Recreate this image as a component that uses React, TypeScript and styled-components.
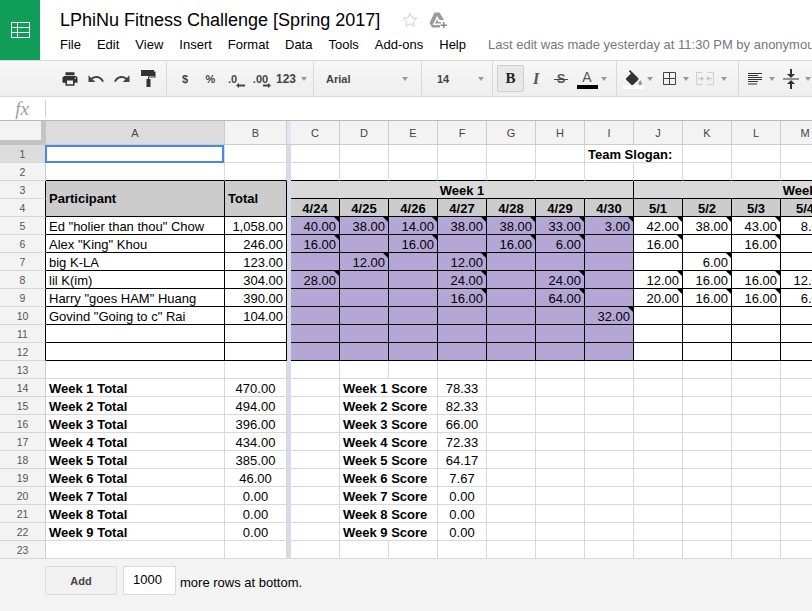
import styled, { createGlobalStyle } from 'styled-components'

const GlobalStyle = createGlobalStyle`
  html, body {
    margin: 0;
    padding: 0;
    background: #fff;
    overflow: hidden;
  }
  body {
    font-family: "Liberation Sans", Arial, sans-serif;
    color: #000;
  }
`

const Page = styled.div`
  width: 812px;
  height: 611px;
  display: flex;
  flex-direction: column;
  overflow: hidden;
`

/* ---- title bar ---- */

const Header = styled.header`
  height: 60px;
  display: flex;
  flex-shrink: 0;
`

const Logo = styled.div`
  width: 40px;
  height: 60px;
  background: #0f9d58;
  display: flex;
  align-items: center;
  justify-content: center;
  flex-shrink: 0;
`

const HeaderBody = styled.div`
  padding: 9px 0 0 20px;
  min-width: 0;
`

const TitleRow = styled.div`
  display: flex;
  align-items: center;
  height: 22px;
`

const Title = styled.div`
  font-size: 18px;
  line-height: 22px;
  white-space: nowrap;
`

const StarIcon = styled.svg`
  margin-left: 22px;
  display: block;
`

const DriveIcon = styled.svg`
  margin-left: 11px;
  display: block;
`

const MenuRow = styled.nav`
  display: flex;
  align-items: center;
  height: 20px;
  margin-top: 3px;
  font-size: 13px;
  white-space: nowrap;
`

const MenuItem = styled.span`
  margin-right: 16px;
`

const LastEdit = styled.span`
  margin-left: 6px;
  color: #777;
`

/* ---- toolbar ---- */

const Toolbar = styled.div`
  height: 37px;
  flex-shrink: 0;
  display: flex;
  box-sizing: border-box;
  border-top: 1px solid #d9d9d9;
  border-bottom: 1px solid #d9d9d9;
  background: linear-gradient(#f7f7f7, #eeeeee);
  overflow: hidden;
`

const Group = styled.div<{ $w: number; $pl?: number; $pr?: number; $spread?: boolean }>`
  width: ${(p) => p.$w}px;
  flex-shrink: 0;
  box-sizing: border-box;
  display: flex;
  align-items: center;
  justify-content: ${(p) => (p.$spread ? 'space-between' : 'flex-start')};
  padding-left: ${(p) => p.$pl ?? 0}px;
  padding-right: ${(p) => p.$pr ?? 0}px;
  border-right: 1px solid #d9d9d9;
`

const LastGroup = styled(Group)`
  border-right: 0;
`

const Tool = styled.div<{ $w: number; $ml?: number }>`
  width: ${(p) => p.$w}px;
  margin-left: ${(p) => p.$ml ?? 0}px;
  flex-shrink: 0;
  display: flex;
  flex-direction: column;
  align-items: center;
  justify-content: center;
  position: relative;
  font-size: 11px;
  font-weight: bold;
  color: #444;
`

const Caret = styled.span`
  width: 0;
  height: 0;
  border-left: 3.5px solid transparent;
  border-right: 3.5px solid transparent;
  border-top: 4px solid #999;
`

const CaretTool = styled(Tool)`
  height: 10px;
`

const ToolLabel = styled.span<{ $size?: number }>`
  font-size: ${(p) => p.$size ?? 11}px;
  line-height: 12px;
  white-space: nowrap;
`

const SelectLabel = styled.span`
  font-size: 11px;
  font-weight: bold;
  color: #444;
`

const DecimalLabel = styled.span<{ $shift: number }>`
  font-size: 11px;
  font-weight: bold;
  line-height: 12px;
  color: #444;
  margin-left: ${(p) => p.$shift}px;
`

const DecimalArrow = styled.span<{ $left: number }>`
  position: absolute;
  left: ${(p) => p.$left}px;
  top: 22px;
`

const BoldButton = styled.div`
  width: 27px;
  height: 27px;
  box-sizing: border-box;
  flex-shrink: 0;
  display: flex;
  align-items: center;
  justify-content: center;
  background: #e8e8e8;
  border: 1px solid #cfcfcf;
  border-radius: 2px;
  font-family: "Liberation Serif", serif;
  font-weight: bold;
  font-size: 15px;
  color: #222;
`

const ItalicMark = styled.span`
  font-family: "Liberation Serif", serif;
  font-style: italic;
  font-weight: bold;
  font-size: 16px;
  color: #555;
`

const StrikeMark = styled.span`
  position: relative;
  font-size: 13px;
  font-weight: bold;
  color: #555;
  &::after {
    content: '';
    position: absolute;
    left: -3px;
    right: -3px;
    top: 8px;
    height: 1px;
    background: #444;
  }
`

const TextColorMark = styled.span`
  font-size: 14px;
  font-weight: normal;
  line-height: 14px;
  color: #555;
  margin-top: -3px;
`

const ColorBar = styled.span<{ $color: string }>`
  position: absolute;
  left: 50%;
  margin-left: -10.5px;
  top: 24px;
  width: 21px;
  height: 4px;
  background: ${(p) => p.$color};
`

const ToolWrap = styled(Tool)`
  height: 35px;
`

/* ---- formula bar ---- */

const FormulaBar = styled.div`
  height: 24px;
  flex-shrink: 0;
  box-sizing: border-box;
  display: flex;
  align-items: center;
  border-bottom: 1px solid #b8b8b8;
`

const FxBox = styled.div`
  width: 45px;
  height: 17px;
  box-sizing: content-box;
  display: flex;
  align-items: center;
  justify-content: center;
  border-right: 1px solid #d0d0d0;
`

const FxLabel = styled.span`
  font-family: "Liberation Serif", serif;
  font-style: italic;
  font-size: 19px;
  color: #a0a0a0;
  line-height: 17px;
  margin-right: 1px;
`

/* ---- sheet ---- */

const SheetClip = styled.div`
  width: 812px;
  height: 438px;
  flex-shrink: 0;
  overflow: hidden;
`

const Sheet = styled.table`
  width: 977px;
  table-layout: fixed;
  border-collapse: separate;
  border-spacing: 0;
  font-size: 13px;
`

const Column = styled.col<{ $w: number }>`
  width: ${(p) => p.$w}px;
`

const Corner = styled.th`
  height: 24px;
  box-sizing: border-box;
  padding: 0;
  background: #f3f3f3;
  border-right: 5px solid #c4c4c4;
  border-bottom: 5px solid #c4c4c4;
`

const ColumnHead = styled.th<{ $active?: boolean }>`
  height: 24px;
  box-sizing: border-box;
  padding: 0;
  font-size: 11px;
  font-weight: normal;
  color: #444;
  background: ${(p) => (p.$active ? '#dcdcdc' : '#f3f3f3')};
  border-right: 1px solid #cccccc;
  border-bottom: 1px solid #cccccc;
`

const RowHead = styled.th<{ $active?: boolean; $dark?: boolean }>`
  height: 18px;
  box-sizing: border-box;
  padding: 0;
  font-size: 10.5px;
  font-weight: normal;
  color: #555;
  background: ${(p) => (p.$active ? '#dcdcdc' : '#f3f3f3')};
  border-right: 1px solid ${(p) => (p.$dark ? '#000' : '#cccccc')};
  border-bottom: 1px solid #d6d6d6;
`

const FreezeBar = styled.td`
  padding: 0;
  background: #d6dbe9;
`

const FreezeHead = styled.th`
  padding: 0;
  background: #e2e6f1;
  border-bottom: 1px solid #cccccc;
`

const Cell = styled.td<{
  $fill?: string
  $align?: string
  $bold?: boolean
  $darkRight?: boolean
  $darkBottom?: boolean
  $flag?: boolean
  $mid?: boolean
  $selected?: boolean
}>`
  position: relative;
  height: 18px;
  box-sizing: border-box;
  padding: 0 3px;
  overflow: hidden;
  white-space: nowrap;
  line-height: 14px;
  vertical-align: ${(p) => (p.$mid ? 'middle' : 'bottom')};
  text-align: ${(p) => p.$align ?? 'left'};
  font-weight: ${(p) => (p.$bold ? 'bold' : 'normal')};
  background: ${(p) => p.$fill ?? '#fff'};
  border-right: 1px solid ${(p) => (p.$darkRight ? '#000' : '#d9d9d9')};
  border-bottom: 1px solid ${(p) => (p.$darkBottom ? '#000' : '#d9d9d9')};

  ${(p) =>
    p.$flag &&
    `
    &::after {
      content: '';
      position: absolute;
      top: 0;
      right: 0;
      border-top: 5px solid #000;
      border-left: 5px solid transparent;
    }
  `}

  ${(p) =>
    p.$selected &&
    `
    overflow: visible;
    &::before {
      content: '';
      position: absolute;
      top: 0;
      left: -1px;
      right: 0;
      bottom: -1px;
      border: 2px solid #4a86e8;
      pointer-events: none;
    }
  `}
`

/* ---- add rows ---- */

const Footer = styled.div`
  flex: 1;
  background: #f3f3f3;
  display: flex;
  align-items: flex-start;
  padding: 7px 0 0 45px;
`

const AddButton = styled.div`
  width: 72px;
  height: 29px;
  box-sizing: border-box;
  display: flex;
  align-items: center;
  justify-content: center;
  background: #f1f1f1;
  border: 1px solid #dcdcdc;
  border-radius: 2px;
  font-size: 11px;
  font-weight: bold;
  color: #444;
`

const RowsInput = styled.div`
  width: 53px;
  height: 29px;
  box-sizing: border-box;
  margin-left: 6px;
  padding: 0 0 3px 9px;
  display: flex;
  align-items: center;
  background: #fff;
  border: 1px solid #d9d9d9;
  font-size: 13px;
`

const FooterText = styled.span`
  margin-left: 4px;
  margin-top: 8px;
  font-size: 13px;
  line-height: 18px;
`

/* ---- icons ---- */

const Icon = ({ w, h, box, children }: { w: number; h: number; box?: string; children: React.ReactNode }) => (
  <svg width={w} height={h} viewBox={box ?? `0 0 ${w} ${h}`} style={{ display: 'block' }}>
    {children}
  </svg>
)

const SheetsLogo = () => (
  <Icon w={19} h={16}>
    <path
      fill="none"
      stroke="#fff"
      strokeWidth="1"
      d="M.5.5h18v15H.5zM.5 5.5h18M.5 10.5h18M6.5.5v15"
    />
  </Icon>
)

const dataColumns = ['C', 'D', 'E', 'F', 'G', 'H', 'I', 'J', 'K', 'L', 'M', 'N', 'O', 'P']
const dates = ['4/24', '4/25', '4/26', '4/27', '4/28', '4/29', '4/30', '5/1', '5/2', '5/3', '5/4', '5/5', '5/6', '5/7']

const people: [string, string, (string | null)[]][] = [
  ['Ed "holier than thou" Chow', '1,058.00', ['40.00', '38.00', '14.00', '38.00', '38.00', '33.00', '3.00', '42.00', '38.00', '43.00', '8.00']],
  ['Alex "King" Khou', '246.00', ['16.00', null, '16.00', null, '16.00', '6.00', null, '16.00', null, '16.00']],
  ['big K-LA', '123.00', [null, '12.00', null, '12.00', null, null, null, null, '6.00']],
  ['lil K(im)', '304.00', ['28.00', null, null, '24.00', null, '24.00', null, '12.00', '16.00', '16.00', '12.00']],
  ['Harry "goes HAM" Huang', '390.00', [null, null, null, '16.00', null, '64.00', null, '20.00', '16.00', '16.00', '6.00']],
  ['Govind "Going to c" Rai', '104.00', [null, null, null, null, null, null, '32.00']],
  ['', '', []],
  ['', '', []],
]

const weekly: [string, string][] = [
  ['470.00', '78.33'],
  ['494.00', '82.33'],
  ['396.00', '66.00'],
  ['434.00', '72.33'],
  ['385.00', '64.17'],
  ['46.00', '7.67'],
  ['0.00', '0.00'],
  ['0.00', '0.00'],
  ['0.00', '0.00'],
]

const PURPLE = '#b4a7d6'
const HEAD = '#cccccc'
const BAND = '#d9d9d9'

const App: React.FC = () => {
  return (
    <Page>
      <GlobalStyle />
      <Header>
        <Logo>
          <SheetsLogo />
        </Logo>
        <HeaderBody>
          <TitleRow>
            <Title>LPhiNu Fitness Challenge [Spring 2017]</Title>
            <StarIcon width="16" height="16" viewBox="0 0 16 16">
              <path
                fill="none"
                stroke="#d0d0d0"
                d="M8 1.2l2 4.6 4.9.4-3.7 3.3 1.1 4.9L8 11.8l-4.3 2.6 1.1-4.9L1.1 6.2 6 5.8z"
              />
            </StarIcon>
            <DriveIcon width="18" height="16" viewBox="0 0 18 16">
              <path fill="#9a9a9a" d="M5.5 0.5h5l4.6 7.5h-4.5L8 4 3.7 13h7.3v2.5H3L0.5 11z" />
              <path fill="#9a9a9a" d="M6.8 9.5L8 7.5 9.3 10H12v1.5H6z" />
              <path fill="#8a8a8a" d="M14 10h1.5v2.5H18V14h-2.5v2H14v-2h-2.5v-1.5H14z" />
            </DriveIcon>
          </TitleRow>
          <MenuRow>
            {['File', 'Edit', 'View', 'Insert', 'Format', 'Data', 'Tools', 'Add-ons', 'Help'].map((item) => (
              <MenuItem key={item}>{item}</MenuItem>
            ))}
            <LastEdit>Last edit was made yesterday at 11:30 PM by anonymous</LastEdit>
          </MenuRow>
        </HeaderBody>
      </Header>

      <Toolbar>
        <Group $w={167} $pl={57}>
          <Tool $w={26}>
            <Icon w={18} h={18} box="0 0 24 24">
              <path
                fill="#333"
                d="M19 8H5c-1.66 0-3 1.34-3 3v6h4v4h12v-4h4v-6c0-1.66-1.34-3-3-3zm-3 11H8v-5h8v5zm3-7c-.55 0-1-.45-1-1s.45-1 1-1 1 .45 1 1-.45 1-1 1zm-1-9H6v4h12V3z"
              />
            </Icon>
          </Tool>
          <Tool $w={26}>
            <Icon w={18} h={18} box="0 0 24 24">
              <path
                fill="#444"
                d="M12.5 8c-2.65 0-5.05.99-6.9 2.6L2 7v9h9l-3.62-3.62c1.39-1.16 3.16-1.88 5.12-1.88 3.54 0 6.55 2.31 7.6 5.5l2.37-.78C21.08 11.03 17.15 8 12.5 8z"
              />
            </Icon>
          </Tool>
          <Tool $w={26}>
            <Icon w={18} h={18} box="0 0 24 24">
              <path
                fill="#444"
                d="M18.4 10.6C16.55 8.99 14.15 8 11.5 8c-4.65 0-8.58 3.03-9.96 7.22L3.9 16c1.05-3.19 4.05-5.5 7.6-5.5 1.95 0 3.73.72 5.12 1.88L13 16h9V7l-3.6 3.6z"
              />
            </Icon>
          </Tool>
          <Tool $w={26}>
            <Icon w={15} h={17}>
              <path fill="#333" d="M0 0h13v1.5h1.5v6H8v1.5h1.5v8h-4v-8H7V6.5h6.5V6H0z" />
            </Icon>
          </Tool>
        </Group>

        <Group $w={147} $pl={5}>
          <Tool $w={26}><ToolLabel>$</ToolLabel></Tool>
          <Tool $w={25}><ToolLabel>%</ToolLabel></Tool>
          <ToolWrap $w={26}>
            <DecimalLabel $shift={-7}>.0</DecimalLabel>
            <DecimalArrow $left={13}>
              <Icon w={9} h={5}>
                <path fill="#444" d="M0 2.5L3 0v1.5h6v2H3V5z" />
              </Icon>
            </DecimalArrow>
          </ToolWrap>
          <ToolWrap $w={23}>
            <DecimalLabel $shift={0}>.00</DecimalLabel>
            <DecimalArrow $left={14}>
              <Icon w={8} h={5}>
                <path fill="#444" d="M8 2.5L5 0v1.5H0v2h5V5z" />
              </Icon>
            </DecimalArrow>
          </ToolWrap>
          <Tool $w={28}><ToolLabel $size={12}>123</ToolLabel></Tool>
          <CaretTool $w={7}><Caret /></CaretTool>
        </Group>

        <Group $w={108} $pl={12} $pr={13} $spread>
          <SelectLabel>Arial</SelectLabel>
          <Caret />
        </Group>

        <Group $w={71} $pl={15} $pr={8} $spread>
          <SelectLabel>14</SelectLabel>
          <Caret />
        </Group>

        <Group $w={124} $pl={4}>
          <BoldButton>B</BoldButton>
          <Tool $w={24}><ItalicMark>I</ItalicMark></Tool>
          <Tool $w={26}><StrikeMark>S</StrikeMark></Tool>
          <ToolWrap $w={26}>
            <TextColorMark>A</TextColorMark>
            <ColorBar $color="#000" />
          </ToolWrap>
          <CaretTool $w={8}><Caret /></CaretTool>
        </Group>

        <Group $w={122} $pl={5}>
          <ToolWrap $w={23}>
            <Icon w={18} h={17} box="2 0 20 19">
              <path
                fill="#333"
                d="M16.56 8.94L7.62 0 6.21 1.41l2.38 2.38-5.15 5.15c-.59.59-.59 1.54 0 2.12l5.5 5.5c.29.29.68.44 1.06.44s.77-.15 1.06-.44l5.5-5.5c.59-.58.59-1.53 0-2.12z"
              />
              <path fill="#9a9a9a" d="M19 11.5s-2 2.17-2 3.5c0 1.1.9 2 2 2s2-.9 2-2c0-1.33-2-3.5-2-3.5z" />
            </Icon>
            <ColorBar $color="#fff" />
          </ToolWrap>
          <CaretTool $w={10}><Caret /></CaretTool>
          <Tool $w={19} $ml={5}>
            <Icon w={13} h={13}>
              <path fill="none" stroke="#444" d="M.5.5h12v12H.5zM6.5.5v12M.5 6.5h12" />
            </Icon>
          </Tool>
          <CaretTool $w={14}><Caret /></CaretTool>
          <Tool $w={24}>
            <Icon w={18} h={13}>
              <path fill="none" stroke="#cfcfcf" d="M.5.5h6M.5.5v12h6M17.5.5h-6M17.5.5v12h-6" />
              <path fill="#c4c4c4" d="M2 6h3V4l3 2.5-3 2.5V7H2zM16 6h-3V4l-3 2.5 3 2.5V7h3z" />
            </Icon>
          </Tool>
          <CaretTool $w={14}><Caret /></CaretTool>
        </Group>

        <LastGroup $w={73} $pl={5}>
          <Tool $w={22}>
            <Icon w={14} h={12}>
              <path
                fill="none"
                stroke="#333"
                d="M0 .5h14M0 2.5h10M0 4.5h14M0 6.5h14M0 8.500h10M0 11h9"
              />
            </Icon>
          </Tool>
          <CaretTool $w={12}><Caret /></CaretTool>
          <Tool $w={26}>
            <Icon w={16} h={20}>
              <path fill="#333" d="M7 0h2v5h3L8 9 4 5h3zM7 20h2v-5h3l-4-4-4 4h3z" />
              <path fill="#333" d="M0 9.5h16v1H0z" />
            </Icon>
          </Tool>
          <CaretTool $w={8}><Caret /></CaretTool>
        </LastGroup>
      </Toolbar>

      <FormulaBar>
        <FxBox>
          <FxLabel>fx</FxLabel>
        </FxBox>
      </FormulaBar>

      <SheetClip>
        <Sheet>
          <colgroup>
            <Column $w={46} />
            <Column $w={179} />
            <Column $w={62} />
            <Column $w={4} />
            {dataColumns.map((c) => (
              <Column key={c} $w={49} />
            ))}
          </colgroup>
          <tbody>
            <tr>
              <Corner />
              <ColumnHead $active>A</ColumnHead>
              <ColumnHead>B</ColumnHead>
              <FreezeHead />
              {dataColumns.map((c) => (
                <ColumnHead key={c}>{c}</ColumnHead>
              ))}
            </tr>

            <tr>
              <RowHead $active>1</RowHead>
              <Cell $selected />
              <Cell />
              <FreezeBar />
              {dataColumns.slice(0, 6).map((c) => (
                <Cell key={c} />
              ))}
              <Cell colSpan={2} $bold>Team Slogan:</Cell>
              {dataColumns.slice(8).map((c) => (
                <Cell key={c} />
              ))}
            </tr>

            <tr>
              <RowHead>2</RowHead>
              <Cell $darkBottom />
              <Cell $darkBottom />
              <FreezeBar />
              {dataColumns.map((c) => (
                <Cell key={c} $darkBottom />
              ))}
            </tr>

            <tr>
              <RowHead $dark>3</RowHead>
              <Cell rowSpan={2} $fill={HEAD} $bold $mid $darkRight $darkBottom>Participant</Cell>
              <Cell rowSpan={2} $fill={HEAD} $bold $mid $darkRight $darkBottom>Total</Cell>
              <FreezeBar />
              <Cell colSpan={7} $fill={BAND} $bold $align="center" $darkRight $darkBottom>Week 1</Cell>
              <Cell colSpan={7} $fill={BAND} $bold $align="center" $darkRight $darkBottom>Week 2</Cell>
            </tr>

            <tr>
              <RowHead $dark>4</RowHead>
              <FreezeBar />
              {dates.map((d) => (
                <Cell key={d} $fill={HEAD} $bold $align="center" $darkRight $darkBottom>{d}</Cell>
              ))}
            </tr>

            {people.map(([name, total, hours], i) => (
              <tr key={i}>
                <RowHead $dark>{i + 5}</RowHead>
                <Cell $darkRight $darkBottom>{name}</Cell>
                <Cell $align="right" $darkRight $darkBottom>{total}</Cell>
                <FreezeBar />
                {dataColumns.map((c, j) => (
                  <Cell
                    key={c}
                    $align="right"
                    $fill={j < 7 ? PURPLE : '#fff'}
                    $darkRight
                    $darkBottom
                    $flag={!!hours[j]}
                  >
                    {hours[j]}
                  </Cell>
                ))}
              </tr>
            ))}

            <tr>
              <RowHead>13</RowHead>
              <Cell />
              <Cell />
              <FreezeBar />
              {dataColumns.map((c) => (
                <Cell key={c} />
              ))}
            </tr>

            {weekly.map(([total, score], i) => (
              <tr key={i}>
                <RowHead>{i + 14}</RowHead>
                <Cell $bold>{`Week ${i + 1} Total`}</Cell>
                <Cell $align="center">{total}</Cell>
                <FreezeBar />
                <Cell />
                <Cell colSpan={2} $bold>{`Week ${i + 1} Score`}</Cell>
                <Cell $align="center">{score}</Cell>
                {dataColumns.slice(4).map((c) => (
                  <Cell key={c} />
                ))}
              </tr>
            ))}

            <tr>
              <RowHead>23</RowHead>
              <Cell />
              <Cell />
              <FreezeBar />
              {dataColumns.map((c) => (
                <Cell key={c} />
              ))}
            </tr>
          </tbody>
        </Sheet>
      </SheetClip>

      <Footer>
        <AddButton>Add</AddButton>
        <RowsInput>1000</RowsInput>
        <FooterText>more rows at bottom.</FooterText>
      </Footer>
    </Page>
  )
}

export default App
